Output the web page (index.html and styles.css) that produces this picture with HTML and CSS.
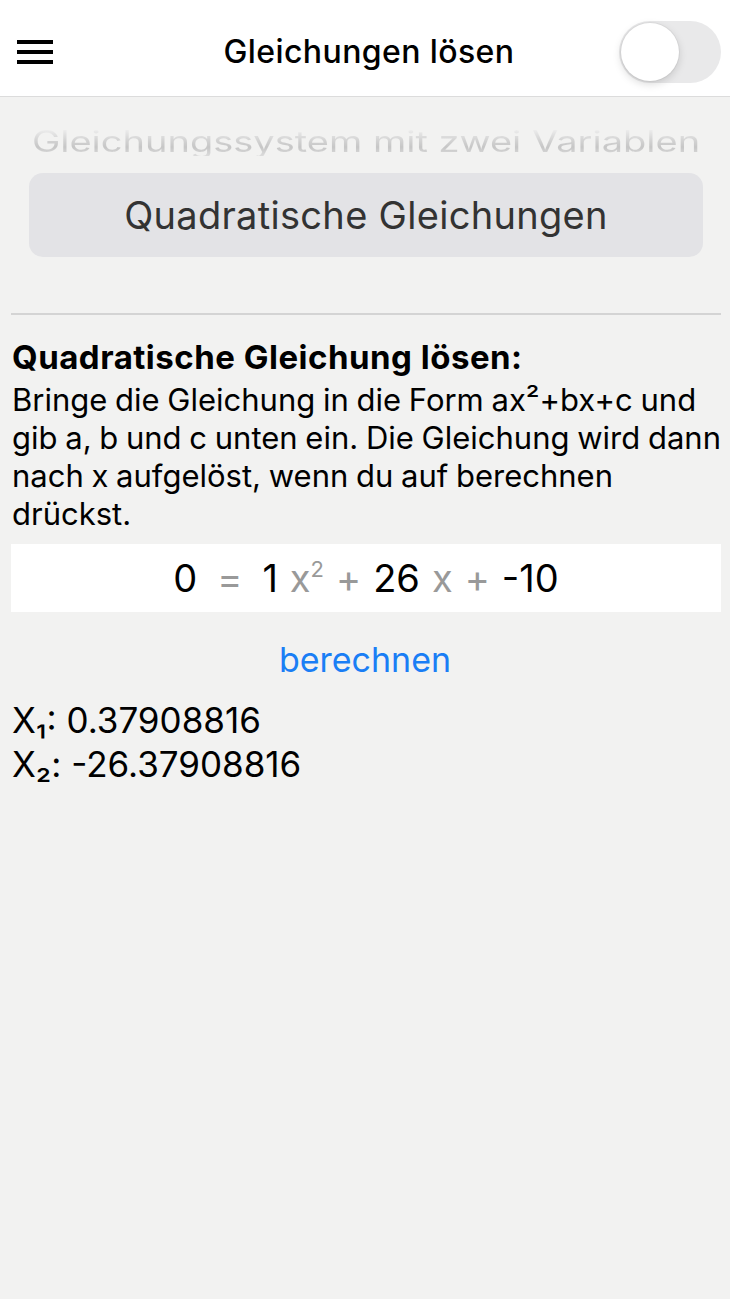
FILE: index.html
```html
<!DOCTYPE html>
<html lang="de">
<head>
<meta charset="utf-8">
<title>Gleichungen lösen</title>
<link rel="stylesheet" href="styles.css">
</head>
<body>
<header class="topbar">
  <div class="menu" aria-label="Menü">
    <span class="bar"></span><span class="bar"></span><span class="bar"></span>
  </div>
  <h1 class="title">Gleichungen lösen</h1>
  <div class="toggle"><span class="knob"></span></div>
</header>
<main class="page">
  <section class="picker">
    <div class="wheel"><span class="wheel-item">Gleichungssystem mit zwei Variablen</span></div>
    <div class="selected">Quadratische Gleichungen</div>
  </section>
  <hr class="sep">
  <section class="intro">
    <h2 class="heading">Quadratische Gleichung lösen:</h2>
    <p class="desc">Bringe die Gleichung in die Form ax²+bx+c und gib a, b und c unten ein. Die Gleichung wird dann nach x aufgelöst, wenn du auf berechnen drückst.</p>
  </section>
  <div class="equation">
    <span class="num">0</span><span class="op eq">=</span><span class="num">1</span><span class="var">x<sup>2</sup></span><span class="op">+</span><span class="num">26</span><span class="var">x</span><span class="op">+</span><span class="num">-10</span>
  </div>
  <div class="action"><span class="link">berechnen</span></div>
  <div class="results">
    <div>X₁: 0.37908816</div>
    <div>X₂: -26.37908816</div>
  </div>
</main>
</body>
</html>
```
FILE: styles.css
```css
* { box-sizing: border-box; }
html, body { margin: 0; padding: 0; }
body {
  width: 730px;
  min-height: 1299px;
  background: #f2f2f1;
  font-family: Inter, "Noto Sans", sans-serif;
  color: #000;
}
.topbar {
  height: 97px;
  background: #fff;
  border-bottom: 1px solid #dcdcdc;
  display: grid;
  grid-template-columns: 1fr auto 1fr;
  align-items: center;
  padding: 0 9px 0 17px;
}
.menu {
  width: 36px;
  display: flex;
  flex-direction: column;
  gap: 6px;
  margin-top: 7px;
}
.bar { display: block; height: 4px; background: #000; }
.title {
  margin: 7px 0 0;
  text-align: center;
  font-size: 32px;
  font-weight: 500;
  letter-spacing: 0.4px;
}
.toggle {
  justify-self: end;
  width: 102px;
  height: 62px;
  border-radius: 31px;
  background: #e9e9ea;
  padding: 2px;
  display: flex;
  margin-top: 7px;
}
.knob {
  width: 58px;
  height: 58px;
  border-radius: 50%;
  background: #fff;
  box-shadow: 0 3px 8px rgba(0,0,0,0.15), 0 0 0 1px rgba(0,0,0,0.04);
}
.picker { padding: 0 27px 0 29px; }
.wheel {
  height: 59px;
  margin-top: 33px;
  overflow: hidden;
  text-align: center;
}
.wheel-item {
  display: inline-block;
  font-size: 38px;
  line-height: 38px;
  white-space: nowrap;
  background: linear-gradient(#f4f4f4 0%, #d4d4d4 45%, #c6c6c6 70%, #dcdcdc 100%);
  -webkit-background-clip: text;
  background-clip: text;
  -webkit-text-fill-color: transparent;
  color: transparent;
  transform: translateY(-12px) scaleY(0.77);
  transform-origin: bottom center;
}
.selected {
  margin-top: -16px;
  height: 84px;
  border-radius: 14px;
  background: #e3e3e6;
  display: flex;
  align-items: center;
  justify-content: center;
  font-size: 38px;
  color: #333;
  letter-spacing: 0.3px;
}
.sep {
  margin: 56px 9px 0 11px;
  border: 0;
  height: 2px;
  background: #d4d4d4;
}
.intro { padding: 0 0 0 12px; margin-top: 22px; }
.heading {
  margin: 0;
  font-size: 33px;
  font-weight: 700;
  line-height: 40px;
  letter-spacing: 0.5px;
}
.desc {
  margin: 4px 0 0;
  font-size: 31px;
  line-height: 38px;
  letter-spacing: 0;
  word-spacing: -1px;
}
.equation {
  margin: 11px 9px 0 11px;
  height: 68px;
  background: #fff;
  display: flex;
  align-items: center;
  justify-content: center;
  font-size: 38px;
  gap: 12px;
}
.equation .eq { margin: 0 8px; }
.op, .var { color: #999; }
.var sup { font-size: 22px; vertical-align: 15px; line-height: 0; }
.action {
  text-align: center;
  margin-top: 27px;
  font-size: 34px;
  color: #1a7ef5;
}
.results {
  padding: 0 12px;
  margin-top: 18px;
  font-size: 35px;
  line-height: 44px;
}
```
